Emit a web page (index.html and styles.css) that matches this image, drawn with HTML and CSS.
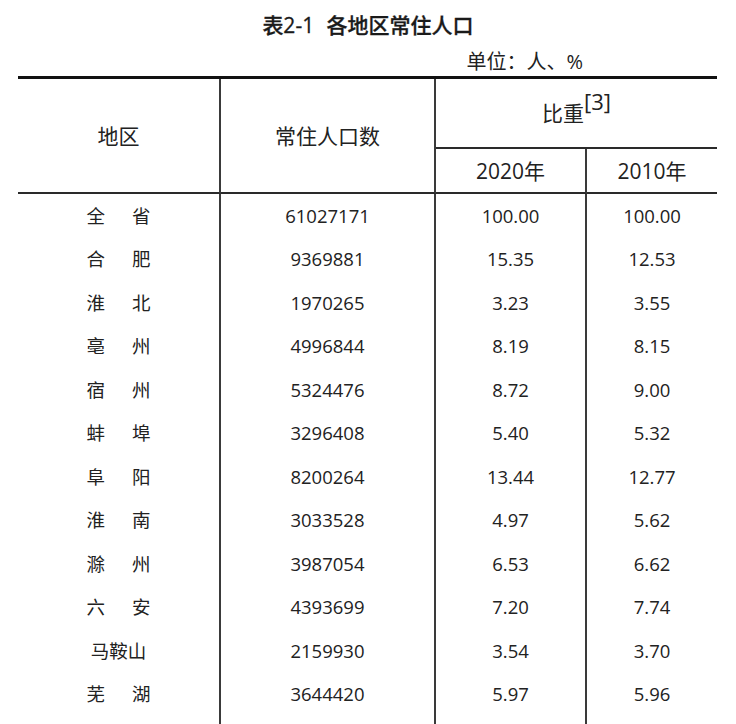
FILE: index.html
```html
<!DOCTYPE html>
<html lang="zh-CN">
<head>
<meta charset="utf-8">
<title>表2-1 各地区常住人口</title>
<link rel="stylesheet" href="styles.css">
</head>
<body>
<div class="page">
  <h1 class="title">表2-1 各地区常住人口</h1>
  <div class="unit">单位：人、%</div>
  <table class="data">
    <colgroup>
      <col class="c-region">
      <col class="c-pop">
      <col class="c-y20">
      <col class="c-y10">
    </colgroup>
    <thead>
      <tr class="h1">
        <th class="hd vr hb" rowspan="2">地区</th>
        <th class="hd vr hb" rowspan="2">常住人口数</th>
        <th class="hd hb" colspan="2">比重<span class="sup">[3]</span></th>
      </tr>
      <tr class="h2">
        <th class="hd vr hb">2020年</th>
        <th class="hd hb">2010年</th>
      </tr>
    </thead>
    <tbody>
      <tr><td class="vr name">全 省</td><td class="vr">61027171</td><td class="vr">100.00</td><td>100.00</td></tr>
      <tr><td class="vr name">合 肥</td><td class="vr">9369881</td><td class="vr">15.35</td><td>12.53</td></tr>
      <tr><td class="vr name">淮 北</td><td class="vr">1970265</td><td class="vr">3.23</td><td>3.55</td></tr>
      <tr><td class="vr name">亳 州</td><td class="vr">4996844</td><td class="vr">8.19</td><td>8.15</td></tr>
      <tr><td class="vr name">宿 州</td><td class="vr">5324476</td><td class="vr">8.72</td><td>9.00</td></tr>
      <tr><td class="vr name">蚌 埠</td><td class="vr">3296408</td><td class="vr">5.40</td><td>5.32</td></tr>
      <tr><td class="vr name">阜 阳</td><td class="vr">8200264</td><td class="vr">13.44</td><td>12.77</td></tr>
      <tr><td class="vr name">淮 南</td><td class="vr">3033528</td><td class="vr">4.97</td><td>5.62</td></tr>
      <tr><td class="vr name">滁 州</td><td class="vr">3987054</td><td class="vr">6.53</td><td>6.62</td></tr>
      <tr><td class="vr name">六 安</td><td class="vr">4393699</td><td class="vr">7.20</td><td>7.74</td></tr>
      <tr><td class="vr">马鞍山</td><td class="vr">2159930</td><td class="vr">3.54</td><td>3.70</td></tr>
      <tr><td class="vr name">芜 湖</td><td class="vr">3644420</td><td class="vr">5.97</td><td>5.96</td></tr>
      <tr class="spacer"><td class="vr"></td><td class="vr"></td><td class="vr"></td><td></td></tr>
    </tbody>
  </table>
</div>
</body>
</html>
```
FILE: styles.css
```css
html, body {
  margin: 0;
  padding: 0;
  background: #ffffff;
}

body {
  font-family: "Open Sans", "Noto Sans CJK SC", sans-serif;
  color: #222222;
  width: 736px;
  height: 724px;
  overflow: hidden;
}

.page {
  width: 736px;
}

.title {
  margin: 0;
  padding-top: 10px;
  height: 30px;
  line-height: 30px;
  font-size: 21px;
  font-weight: 500;
  word-spacing: 7px;
  text-align: center;
  color: #1a1a1a;
  -webkit-text-stroke: 0.3px #1a1a1a;
}

.unit {
  margin-top: 8px;
  height: 28px;
  line-height: 28px;
  font-size: 20px;
  text-align: right;
  padding-right: 153px;
}

.data {
  margin-left: 18px;
  width: 699px;
  table-layout: fixed;
  border-collapse: separate;
  border-spacing: 0;
  border-top: 3px solid #111111;
}

.c-region { width: 203px; }
.c-pop { width: 215px; }
.c-y20 { width: 151px; }
.c-y10 { width: 130px; }

.data th,
.data td {
  box-sizing: border-box;
  padding: 0;
  text-align: center;
  vertical-align: middle;
  white-space: nowrap;
}

.hd {
  font-weight: 400;
  font-size: 21px;
  line-height: 26px;
}

.h1 .hd[colspan] {
  height: 70px;
}

.h2 .hd {
  height: 45px;
}

.vr {
  border-right: 2px solid #3a3a3a;
}

.hb {
  border-bottom: 2px solid #2a2a2a;
}

.sup {
  display: inline-block;
  line-height: 0;
  vertical-align: 11px;
  font-size: 22px;
  margin-left: 0;
}

.data td {
  height: 43.5px;
  font-size: 18.5px;
  line-height: 24px;
}

.name {
  word-spacing: 22px;
}

.data .spacer td {
  height: 30px;
}
```
